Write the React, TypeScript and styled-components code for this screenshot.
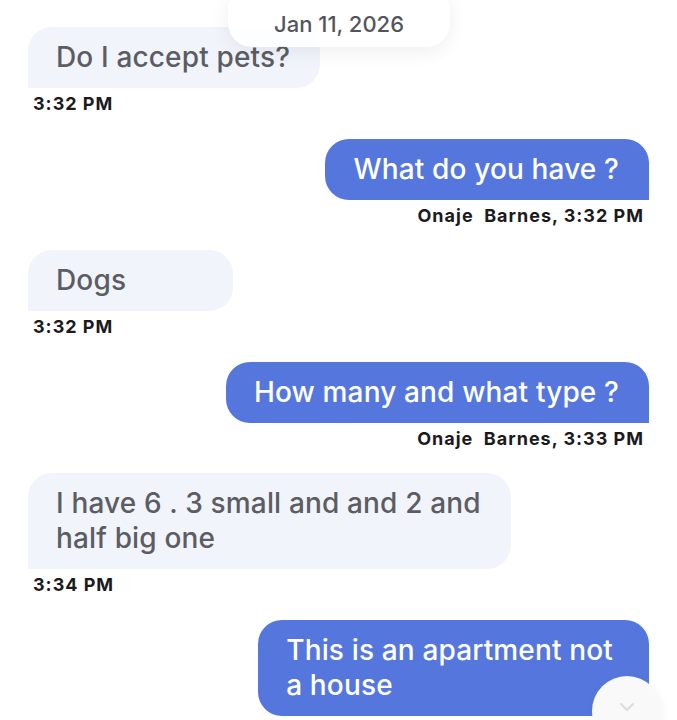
import React, { FC } from "react";
import styled, { createGlobalStyle } from "styled-components";

interface IMessage {
  id: number;
  mine: boolean;
  lines: string[];
  time: string;
  sender?: string;
}

const messages: IMessage[] = [
  { id: 1, mine: false, lines: ["Do I accept pets?"], time: "3:32 PM" },
  { id: 2, mine: true, lines: ["What do you have ?"], time: "3:32 PM", sender: "Onaje  Barnes" },
  { id: 3, mine: false, lines: ["Dogs"], time: "3:32 PM" },
  { id: 4, mine: true, lines: ["How many and what type ?"], time: "3:33 PM", sender: "Onaje  Barnes" },
  { id: 5, mine: false, lines: ["I have 6 . 3 small and and 2 and", "half big one"], time: "3:34 PM" },
  { id: 6, mine: true, lines: ["This is an apartment not", "a house"], time: "3:35 PM", sender: "Onaje  Barnes" }
];

const App: FC = () => {
  return (
    <>
      <GlobalStyle />
      <Screen>
        <DatePill>Jan 11, 2026</DatePill>
        <Thread>
          {messages.map(m => (
            <Group key={m.id} mine={m.mine}>
              <Bubble mine={m.mine} wide={m.lines.length > 1}>
                {m.lines.map((l, i) => (
                  <Line key={i}>{l}</Line>
                ))}
              </Bubble>
              <Meta mine={m.mine}>{m.sender ? `${m.sender}, ${m.time}` : m.time}</Meta>
            </Group>
          ))}
        </Thread>
        <ScrollDown aria-label="Scroll down">
          <svg width="24" height="24" viewBox="0 0 24 24" fill="none" stroke="#dcdde1" strokeWidth="2.2" strokeLinecap="round" strokeLinejoin="round">
            <path d="M6 9l6 6 6-6" />
          </svg>
        </ScrollDown>
      </Screen>
    </>
  );
};

const GlobalStyle = createGlobalStyle`
  html, body {
    margin: 0;
    padding: 0;
    background: #fff;
  }
  body {
    font-family: Inter, "Noto Sans", "Liberation Sans", sans-serif;
    -webkit-font-smoothing: antialiased;
  }
`;

const Screen = styled.div`
  position: relative;
  width: 677px;
  height: 720px;
  overflow: hidden;
  background: #fff;
`;

const Thread = styled.div`
  display: flex;
  flex-direction: column;
  gap: 23.5px;
  padding: 27px 28px 0 28px;
`;

const Group = styled.div<{ mine: boolean }>`
  display: flex;
  flex-direction: column;
  align-items: ${p => (p.mine ? "flex-end" : "flex-start")};
`;

const Bubble = styled.div<{ mine: boolean; wide: boolean }>`
  box-sizing: border-box;
  width: max-content;
  min-width: 205px;
  padding: 13px ${p => (p.mine && p.wide ? "36px" : "30px")} 13px 28px;
  font-size: 28px;
  font-weight: 500;
  line-height: 35px;
  letter-spacing: 0.15px;
  color: ${p => (p.mine ? "#ffffff" : "#5c5d63")};
  background: ${p => (p.mine ? "#5577dd" : "#f1f4fb")};
  border-radius: ${p => (p.mine ? "24px 24px 0 24px" : "24px 24px 24px 0")};
`;

const Line = styled.div`
  white-space: nowrap;
`;

const Meta = styled.div<{ mine: boolean }>`
  margin-top: 5px;
  padding: ${p => (p.mine ? "0 5px 0 0" : "0 0 0 5px")};
  font-size: 18px;
  line-height: 22px;
  font-weight: 700;
  letter-spacing: 1px;
  color: #1b1b1d;
  white-space: pre;
`;

const DatePill = styled.div`
  position: absolute;
  top: -14px;
  left: 228px;
  width: 222px;
  height: 61px;
  padding-top: 14px;
  box-sizing: border-box;
  display: flex;
  align-items: center;
  justify-content: center;
  font-size: 22px;
  font-weight: 500;
  color: #54555b;
  background: rgba(255, 255, 255, 0.86);
  border-radius: 24px;
  box-shadow: 0 4px 20px rgba(0, 0, 0, 0.07);
  z-index: 2;
`;

const ScrollDown = styled.div`
  position: absolute;
  left: 592px;
  top: 676px;
  width: 70px;
  height: 70px;
  border-radius: 50%;
  background: #f9f9f9;
  box-shadow: 0 2px 10px rgba(0, 0, 0, 0.05);
  display: flex;
  align-items: flex-start;
  justify-content: center;
  padding-top: 19px;
  box-sizing: border-box;
`;

export default App;
